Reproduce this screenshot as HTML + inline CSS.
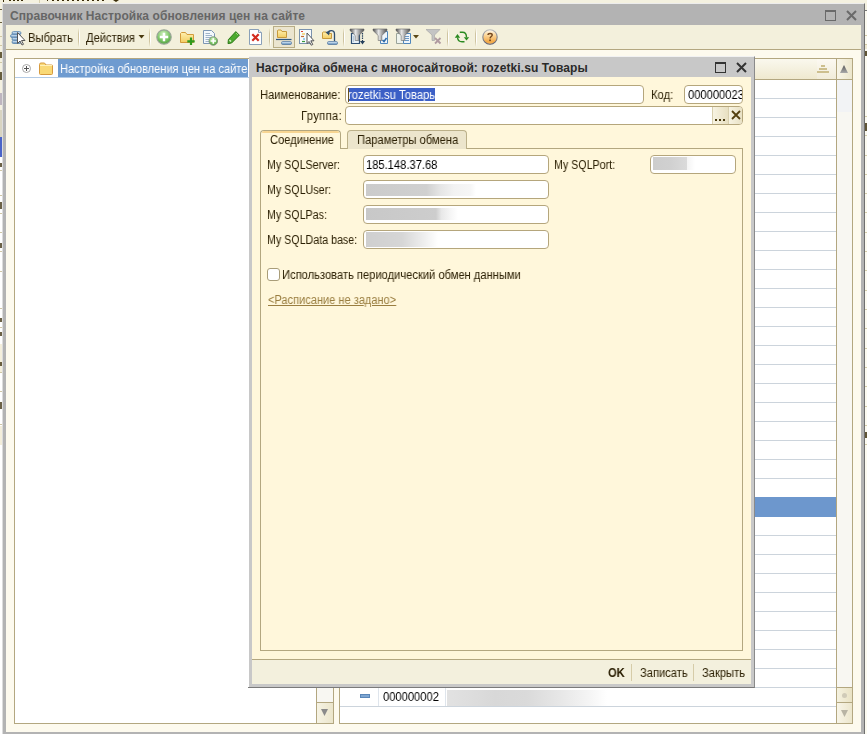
<!DOCTYPE html>
<html><head><meta charset="utf-8">
<style>
*{box-sizing:border-box;margin:0;padding:0}
html,body{width:867px;height:734px;overflow:hidden;background:#f4f1e0;font-family:"Liberation Sans",sans-serif;font-size:12px;color:#2c2004}
.a{position:absolute}
.t{position:absolute;white-space:nowrap;line-height:13px;font-size:12px;transform:scaleX(.93);transform-origin:0 0;will-change:transform}
.b{position:absolute;white-space:nowrap;line-height:14px;font-size:12px;font-weight:bold}
.fld{position:absolute;background:#fff;border:1px solid #b5a67c;border-radius:4px}
svg{position:absolute;overflow:visible}
</style></head><body>
<!-- background app -->
<div class="a" style="left:3px;top:0;width:1px;height:2px;background:#3a2c08"></div>
<div class="a" style="left:9px;top:0;width:15px;height:1px;background:repeating-linear-gradient(90deg,#3a2c08 0 2px,transparent 2px 4px)"></div>
<div class="a" style="left:39px;top:0;width:1px;height:3px;background:#d8d0b0"></div>
<div class="a" style="left:47px;top:0;width:1px;height:1px;background:#3a2c08"></div>
<div class="a" style="left:52px;top:0;width:54px;height:1px;background:repeating-linear-gradient(90deg,#3a2c08 0 2px,transparent 2px 5px)"></div>
<div class="a" style="left:113px;top:0;width:6px;height:2px;background:#3a2c08;clip-path:polygon(0 0,100% 0,50% 100%)"></div>
<div class="a" style="left:0;top:110px;width:3px;height:27px;background:#d8d4c0"></div>
<div class="a" style="left:0;top:137px;width:3px;height:20px;background:#4a64c8"></div>
<div class="a" style="left:0;top:157px;width:3px;height:583px;background:#fff"></div><div class="a" style="left:0;top:426px;width:2px;height:19px;background:#f3eedb"></div>
<div class="a" style="left:0;top:36px;width:2px;height:1px;background:#cfc6a4"></div>
<div class="a" style="left:0;top:45px;width:2px;height:1px;background:#cfc6a4"></div>
<div class="a" style="left:0;top:62px;width:2px;height:1px;background:#cfc6a4"></div>
<div class="a" style="left:0;top:170px;width:2px;height:1px;background:#cfc6a4"></div>
<div class="a" style="left:0;top:195px;width:2px;height:1px;background:#cfc6a4"></div>
<div class="a" style="left:0;top:213px;width:2px;height:1px;background:#cfc6a4"></div>
<div class="a" style="left:0;top:232px;width:2px;height:1px;background:#cfc6a4"></div>
<div class="a" style="left:0;top:251px;width:2px;height:1px;background:#cfc6a4"></div>
<div class="a" style="left:0;top:271px;width:2px;height:1px;background:#cfc6a4"></div>
<div class="a" style="left:0;top:308px;width:2px;height:1px;background:#cfc6a4"></div>
<div class="a" style="left:0;top:327px;width:2px;height:1px;background:#cfc6a4"></div>
<div class="a" style="left:0;top:344px;width:2px;height:1px;background:#cfc6a4"></div>
<div class="a" style="left:0;top:372px;width:2px;height:1px;background:#cfc6a4"></div>
<div class="a" style="left:0;top:391px;width:2px;height:1px;background:#cfc6a4"></div>
<div class="a" style="left:0;top:424px;width:2px;height:1px;background:#cfc6a4"></div>
<div class="a" style="left:0;top:344px;width:2px;height:28px;background:#f4efdc"></div>
<div class="a" style="left:0;top:9px;width:2px;height:1px;background:#3a2c08;opacity:.75"></div>
<div class="a" style="left:0;top:22px;width:2px;height:1px;background:#3a2c08;opacity:.75"></div>
<div class="a" style="left:0;top:52px;width:2px;height:6px;background:#3a2c08;opacity:.75"></div>
<div class="a" style="left:0;top:72px;width:2px;height:8px;background:#3a2c08;opacity:.75"></div>
<div class="a" style="left:0;top:163px;width:2px;height:4px;background:#3a2c08;opacity:.75"></div>
<div class="a" style="left:0;top:202px;width:2px;height:7px;background:#3a2c08;opacity:.75"></div>
<div class="a" style="left:0;top:243px;width:2px;height:5px;background:#3a2c08;opacity:.75"></div>
<div class="a" style="left:0;top:318px;width:2px;height:4px;background:#3a2c08;opacity:.75"></div>
<div class="a" style="left:0;top:332px;width:2px;height:4px;background:#3a2c08;opacity:.75"></div>
<div class="a" style="left:0;top:362px;width:2px;height:4px;background:#3a2c08;opacity:.75"></div>
<div class="a" style="left:0;top:402px;width:2px;height:7px;background:#3a2c08;opacity:.75"></div>
<div class="a" style="left:0;top:93px;width:2px;height:12px;background:#9a90a8;opacity:.6"></div>
<div class="a" style="left:865px;top:10px;width:2px;height:724px;background:#fcfaf0"></div>
<div class="a" style="left:865px;top:10px;width:2px;height:1px;background:#777"></div>
<div class="a" style="left:865px;top:35px;width:2px;height:1px;background:#cfc6a4"></div>
<div class="a" style="left:865px;top:44px;width:2px;height:5px;background:#efe9d2;border-top:1px solid #cfc6a4"></div>
<div class="a" style="left:865px;top:116px;width:2px;height:1px;background:#d4ccaa"></div>
<div class="a" style="left:865px;top:135px;width:2px;height:1px;background:#d4ccaa"></div>
<div class="a" style="left:865px;top:155px;width:2px;height:1px;background:#d4ccaa"></div>
<div class="a" style="left:865px;top:174px;width:2px;height:1px;background:#d4ccaa"></div>
<div class="a" style="left:865px;top:193px;width:2px;height:1px;background:#d4ccaa"></div>
<div class="a" style="left:865px;top:212px;width:2px;height:1px;background:#d4ccaa"></div>
<div class="a" style="left:865px;top:232px;width:2px;height:1px;background:#d4ccaa"></div>
<div class="a" style="left:865px;top:251px;width:2px;height:1px;background:#d4ccaa"></div>
<div class="a" style="left:865px;top:270px;width:2px;height:1px;background:#d4ccaa"></div>
<div class="a" style="left:865px;top:290px;width:2px;height:1px;background:#d4ccaa"></div>
<div class="a" style="left:865px;top:309px;width:2px;height:1px;background:#d4ccaa"></div>
<div class="a" style="left:865px;top:328px;width:2px;height:1px;background:#d4ccaa"></div>
<div class="a" style="left:865px;top:348px;width:2px;height:1px;background:#d4ccaa"></div>
<div class="a" style="left:865px;top:367px;width:2px;height:1px;background:#d4ccaa"></div>
<div class="a" style="left:865px;top:386px;width:2px;height:1px;background:#d4ccaa"></div>
<div class="a" style="left:865px;top:406px;width:2px;height:1px;background:#d4ccaa"></div>
<div class="a" style="left:865px;top:425px;width:2px;height:1px;background:#d4ccaa"></div>
<div class="a" style="left:865px;top:444px;width:2px;height:1px;background:#d4ccaa"></div>
<div class="a" style="left:865px;top:51px;width:2px;height:5px;background:#3a2c08;opacity:.8"></div>
<div class="a" style="left:865px;top:123px;width:2px;height:8px;background:#3a2c08;opacity:.8"></div>
<div class="a" style="left:865px;top:432px;width:2px;height:6px;background:#3a2c08;opacity:.8"></div>
<!-- main window frame -->
<div class="a" style="left:2px;top:3px;width:863px;height:731px;background:#b3b3b3;border-top:1px solid #ececec;border-left:1px solid #dcdcdc;border-right:1px solid #707070"></div>
<div class="b" style="left:10px;top:9px;color:#666;letter-spacing:.07px">Справочник Настройка обновления цен на сайте</div>
<div class="a" style="left:825px;top:10px;width:11px;height:11px;border:1px solid #6a6a6a;border-top-width:2px"></div>
<svg style="left:846px;top:10px" width="11" height="11"><path d="M1 1L10 10M10 1L1 10" stroke="#6a6a6a" stroke-width="2"/></svg>

<div class="a" style="left:6px;top:25px;width:855px;height:707px;background:#fdfaee"></div>
<!-- toolbar -->
<div class="a" style="left:6px;top:25px;width:855px;height:25px;background:#f3f0dc;border-bottom:1px solid #b3a780"></div>
<div class="t" style="left:28px;top:32px">Выбрать</div>
<div class="a" style="left:78px;top:28px;width:1px;height:19px;background:linear-gradient(#f3f0dc,#cfc4a0 30%,#cfc4a0 70%,#f3f0dc)"></div><div class="a" style="left:79px;top:28px;width:1px;height:19px;background:linear-gradient(#f3f0dc,#fff 30%,#fff 70%,#f3f0dc)"></div>
<div class="t" style="left:86px;top:32px">Действия</div>
<svg style="left:138px;top:35px" width="7" height="4"><path d="M0.5 0H6.5L3.5 3.5Z" fill="#4a3a10"/></svg>
<div class="a" style="left:149px;top:28px;width:1px;height:19px;background:linear-gradient(#f3f0dc,#cfc4a0 30%,#cfc4a0 70%,#f3f0dc)"></div><div class="a" style="left:150px;top:28px;width:1px;height:19px;background:linear-gradient(#f3f0dc,#fff 30%,#fff 70%,#f3f0dc)"></div>
<div class="a" style="left:269px;top:28px;width:1px;height:19px;background:linear-gradient(#f3f0dc,#cfc4a0 30%,#cfc4a0 70%,#f3f0dc)"></div><div class="a" style="left:270px;top:28px;width:1px;height:19px;background:linear-gradient(#f3f0dc,#fff 30%,#fff 70%,#f3f0dc)"></div>
<div class="a" style="left:273px;top:26px;width:22px;height:22px;background:#ebe5cf;border:1px solid #b8ad86"></div>
<div class="a" style="left:343px;top:28px;width:1px;height:19px;background:linear-gradient(#f3f0dc,#cfc4a0 30%,#cfc4a0 70%,#f3f0dc)"></div><div class="a" style="left:344px;top:28px;width:1px;height:19px;background:linear-gradient(#f3f0dc,#fff 30%,#fff 70%,#f3f0dc)"></div>
<div class="a" style="left:447px;top:28px;width:1px;height:19px;background:linear-gradient(#f3f0dc,#cfc4a0 30%,#cfc4a0 70%,#f3f0dc)"></div><div class="a" style="left:448px;top:28px;width:1px;height:19px;background:linear-gradient(#f3f0dc,#fff 30%,#fff 70%,#f3f0dc)"></div>
<div class="a" style="left:475px;top:28px;width:1px;height:19px;background:linear-gradient(#f3f0dc,#cfc4a0 30%,#cfc4a0 70%,#f3f0dc)"></div><div class="a" style="left:476px;top:28px;width:1px;height:19px;background:linear-gradient(#f3f0dc,#fff 30%,#fff 70%,#f3f0dc)"></div>

<svg style="left:0;top:0" width="1" height="1"><defs>
<linearGradient id="gBlueBar" x1="0" y1="0" x2="0" y2="1"><stop offset="0" stop-color="#e4eff8"/><stop offset=".5" stop-color="#a6c4e0"/><stop offset="1" stop-color="#4a78a6"/></linearGradient>
<radialGradient id="gGreen" cx=".45" cy=".3" r=".75"><stop offset="0" stop-color="#d2f0c0"/><stop offset=".55" stop-color="#80c86a"/><stop offset="1" stop-color="#4a9a3a"/></radialGradient>
<linearGradient id="gFold" x1="0" y1="0" x2="0" y2="1"><stop offset="0" stop-color="#fff0b0"/><stop offset="1" stop-color="#f3cd62"/></linearGradient>
<linearGradient id="gFun" x1="0" y1="0" x2="1" y2="0"><stop offset="0" stop-color="#4a4a4a"/><stop offset=".4" stop-color="#e8e8e8"/><stop offset=".6" stop-color="#b0b0b0"/><stop offset="1" stop-color="#505050"/></linearGradient>
<linearGradient id="gHelp" x1="0" y1="0" x2="0" y2="1"><stop offset="0" stop-color="#fffaf0"/><stop offset=".35" stop-color="#fbd9a0"/><stop offset=".85" stop-color="#f3a844"/><stop offset="1" stop-color="#f7c070"/></linearGradient><linearGradient id="gHelpB" x1="0" y1="0" x2="0" y2="1"><stop offset="0" stop-color="#b8b8b8"/><stop offset="1" stop-color="#5a5a6a"/></linearGradient>
</defs></svg>
<!-- Выбрать -->
<svg style="left:10px;top:31px" width="16" height="15">
 <rect x="2" y="0.5" width="9" height="3" rx="1.5" fill="url(#gBlueBar)" stroke="#5b86b0" stroke-width=".8"/>
 <rect x="0.5" y="3.5" width="10" height="3" rx="1.5" fill="url(#gBlueBar)" stroke="#5b86b0" stroke-width=".8"/>
 <rect x="2" y="6.5" width="9" height="3" rx="1.5" fill="url(#gBlueBar)" stroke="#5b86b0" stroke-width=".8"/>
 <rect x="2" y="9.5" width="9" height="3" rx="1.5" fill="url(#gBlueBar)" stroke="#5b86b0" stroke-width=".8"/>
 <path d="M7.5 1.5V12.5L10 10L12 14L13.5 13.3L11.5 9.5H15Z" fill="#fff" stroke="#555" stroke-width="1" stroke-linejoin="round"/>
</svg>
<!-- green plus -->
<svg style="left:156px;top:29px" width="16" height="16">
 <circle cx="8" cy="8" r="7.2" fill="url(#gGreen)" stroke="#9aa698" stroke-width="1.2"/>
 <path d="M8 3.8V12.2M3.8 8H12.2" stroke="#fff" stroke-width="2.4"/>
</svg>
<!-- folder plus -->
<svg style="left:180px;top:31px" width="16" height="15">
 <path d="M0.5 2.5V11.5H13.5V3.5H7L5.5 1.5H1.5Z" fill="url(#gFold)" stroke="#d39b3a" stroke-width="1"/>
 <path d="M11 6.5V14M7.3 10.3H14.7" stroke="#2f9a1e" stroke-width="2.2"/>
</svg>
<!-- doc plus -->
<svg style="left:203px;top:30px" width="16" height="16">
 <path d="M0.5 0.5H8.5L11.5 3.5V13.5H0.5Z" fill="#f4f8fc" stroke="#7c96b4" stroke-width="1"/>
 <path d="M2.5 3.5H7M2.5 5.5H9M2.5 7.5H9M2.5 9.5H6M2.5 11.5H6" stroke="#9fb3c9" stroke-width="1"/>
 <circle cx="10.3" cy="11" r="4.3" fill="url(#gGreen)" stroke="#7a8a7a" stroke-width=".8"/>
 <path d="M10.3 8.3V13.7M7.6 11H13" stroke="#fff" stroke-width="1.6"/>
</svg>
<!-- pencil -->
<svg style="left:227px;top:31px" width="13" height="13">
 <path d="M8.8 0.6L12.4 4.2L4.6 12L1 12.6L1.4 8.6Z" fill="#4caa2e" stroke="#2f7a1c" stroke-width="1" stroke-linejoin="round"/>
 <path d="M2.5 9L4 10.5" stroke="#d8f0c8" stroke-width="1.5"/>
 <path d="M9 2L11 4" stroke="#9ad67a" stroke-width="1"/>
</svg>
<!-- delete doc -->
<svg style="left:249px;top:29px" width="14" height="16">
 <path d="M0.5 0.5H9.5L12.5 3.5V15.5H0.5Z" fill="#fff" stroke="#8aa0b8" stroke-width="1"/>
 <path d="M9.5 0.5V3.5H12.5" fill="#e4ecf4" stroke="#8aa0b8" stroke-width="1"/>
 <path d="M3.3 5.3L9.7 11.7M9.7 5.3L3.3 11.7" stroke="#d22a1e" stroke-width="2.2"/>
</svg>
<!-- hierarchy (pressed) -->
<svg style="left:276px;top:29px" width="16" height="16">
 <path d="M1.5 1.5V8.5H10.5V2.5H6L5 1H2Z" fill="url(#gFold)" stroke="#c89a3c" stroke-width="1"/>
 <path d="M0 10.5H15.5" stroke="#2f567e" stroke-width="1.2"/>
 <rect x="5.5" y="12.5" width="10" height="3" rx="1.3" fill="url(#gBlueBar)" stroke="#5a7ea4" stroke-width=".8"/>
</svg>
<!-- list cursor -->
<svg style="left:299px;top:29px" width="17" height="17">
 <rect x="0.5" y="0.5" width="12" height="14" fill="#f8fafc" stroke="#7a92ae" stroke-width="1"/>
 <path d="M2 2.5H4" stroke="#e04030" stroke-width="1.2"/>
 <path d="M3 5H6" stroke="#f0c040" stroke-width="1.2"/>
 <path d="M2 7.5H5" stroke="#c06a30" stroke-width="1.2"/>
 <path d="M4 10H6" stroke="#40a0e0" stroke-width="1.2"/>
 <path d="M3 12.5H6" stroke="#3a9a3a" stroke-width="1.2"/>
 <path d="M8 4V14.5L10.2 12.5L12.2 16.2L13.8 15.5L11.8 11.8H15Z" fill="#fff" stroke="#555" stroke-width="1" stroke-linejoin="round"/>
</svg>
<!-- folder up/back -->
<svg style="left:322px;top:29px" width="17" height="17">
 <path d="M0.5 3.5V9.5H9.5V4.5H5L4 3H1Z" fill="url(#gFold)" stroke="#c89a3c" stroke-width="1"/>
 <rect x="5.5" y="12.5" width="10" height="3" rx="1.3" fill="url(#gBlueBar)" stroke="#5a7ea4" stroke-width=".8"/>
 <path d="M5.5 4.5C6 1 12.5 0 12.5 5V12" fill="none" stroke="#2f4e6e" stroke-width="1.3"/>
 <path d="M3.5 3L7 6.5L8 2Z" fill="#2f4e6e"/>
</svg>
<!-- filter 1 -->
<svg style="left:350px;top:29px" width="16" height="16">
 <path d="M1.5 4.5H9.5V14.5H1.5Z" fill="#e6f0f8" stroke="#2f4f74" stroke-width="1.2"/>
 <path d="M3 8H4M3 10H4M3 12H4" stroke="#8aa4c0" stroke-width="1"/>
 <path d="M0 0H14V1.5L8.8 6.5V11.5H5.2V6.5L0 1.5Z" fill="url(#gFun)" stroke="#666" stroke-width=".6"/>
 <path d="M12.5 4V13" stroke="#26405c" stroke-width="1.2" stroke-dasharray="1.5 .8"/><path d="M10 12H15L12.5 15.5Z" fill="#26405c"/>
</svg>
<!-- filter 2 -->
<svg style="left:373px;top:29px" width="16" height="16">
 <path d="M7.5 2.5H14.5V14.5H7.5Z" fill="#eef5fb" stroke="#4f86bc" stroke-width="1"/>
 <path d="M9.5 11L11 12.5L13.5 9" fill="none" stroke="#2c6aa8" stroke-width="1.5"/>
 <path d="M0 0H14V1.5L8.8 6.5V11.5H5.2V6.5L0 1.5Z" fill="url(#gFun)" stroke="#666" stroke-width=".6"/>
</svg>
<!-- filter 3 -->
<svg style="left:396px;top:29px" width="16" height="16">
 <path d="M0.5 4.5H7.5V14.5H0.5Z" fill="#eef3ee" stroke="#9aa49a" stroke-width="1"/>
 <path d="M7.5 4.5H14.5V14.5H7.5Z" fill="#eef5fb" stroke="#4f86bc" stroke-width="1"/>
 <path d="M9 7.5H13M9 9.5H13M9 11.5H13" stroke="#6a98c8" stroke-width="1"/>
 <path d="M0 0H14V1.5L8.8 6.5V11.5H5.2V6.5L0 1.5Z" fill="url(#gFun)" stroke="#666" stroke-width=".6"/>
</svg>
<svg style="left:413px;top:35px" width="6" height="4"><path d="M0 0H6L3 3.5Z" fill="#5a4818"/></svg>
<!-- filter off -->
<svg style="left:426px;top:29px" width="16" height="16">
 <path d="M0 0.5H14L8.5 6V11.5H6V6Z" fill="#c4c4c4" stroke="#a8a8a8" stroke-width=".7"/>
 <path d="M9 9L14.5 14.5M14.5 9L9 14.5" stroke="#b09aa0" stroke-width="1.8"/>
</svg>
<!-- refresh -->
<svg style="left:455px;top:31px" width="15" height="12">
 <path d="M2.5 6.5Q3 10.8 7 10.8H9.5" fill="none" stroke="#2a8a20" stroke-width="1.4"/>
 <path d="M4.8 1.3H7.5Q11.5 1.3 11.5 6.3" fill="none" stroke="#2a8a20" stroke-width="1.4"/>
 <path d="M-0.2 6.8H5.2L2.5 3Z" fill="#2a8a20"/>
 <path d="M8.8 6.2H14.2L11.5 9.6Z" fill="#2a8a20"/>
</svg>
<!-- help -->
<svg style="left:482px;top:29px" width="16" height="16">
 <circle cx="8" cy="8" r="7.2" fill="url(#gHelp)" stroke="url(#gHelpB)" stroke-width="1.1"/>
 <path d="M6 6C6 3.9 10.2 3.9 10.2 6C10.2 7.5 8.2 7.6 8 9.4" fill="none" stroke="#74461c" stroke-width="1.4"/>
 <rect x="7.2" y="10.5" width="1.7" height="1.6" fill="#74461c"/>
</svg>


<!-- tree panel -->
<div class="a" style="left:14px;top:58px;width:320px;height:666px;background:#fff;border:1px solid #b3a780"></div>
<div class="a" style="left:58px;top:59px;width:190px;height:18px;background:#6e9bd0"></div>
<div class="a" style="left:15px;top:77px;width:301px;height:1px;background:#b3cbe6"></div>
<div class="t" style="left:60px;top:63px;color:#fff;transform:scaleX(.92)">Настройка обновления цен на сайте</div>

<svg style="left:22px;top:64px" width="10" height="10">
 <circle cx="4.5" cy="4.5" r="4" fill="#fff" stroke="#a8a8a8" stroke-width="1"/>
 <path d="M4.5 2V7M2 4.5H7" stroke="#555" stroke-width="1"/>
</svg>
<svg style="left:39px;top:62px" width="15" height="13">
 <path d="M0.5 3V11.5Q0.5 12.5 1.5 12.5H12.5Q13.5 12.5 13.5 11.5V3.5Q13.5 3 12.5 3H7L5.5 1H2Q0.5 1 0.5 2.5Z" fill="#f9d977" stroke="#d69a3e" stroke-width="1"/>
 <path d="M1 3.5H13" stroke="#fff1b8" stroke-width="1"/>
</svg>

<div class="a" style="left:316px;top:59px;width:17px;height:664px;background:#f8f7f2;border-left:1px solid #b3a780"></div>
<div class="a" style="left:316px;top:702px;width:17px;height:21px;background:linear-gradient(90deg,#f6f3e4,#ebe5cb);border-left:1px solid #b3a780;border-top:1px solid #b3a780"></div>
<svg style="left:321px;top:709px" width="7" height="7"><path d="M0 0H7L3.5 7Z" fill="#8a8a8a"/></svg>

<!-- list panel -->
<div class="a" style="left:339px;top:58px;width:514px;height:666px;background:#fff;border:1px solid #b3a780"></div>
<div class="a" style="left:340px;top:59px;width:496px;height:21px;background:linear-gradient(#faf8ee,#efe9cf);border-bottom:1px solid #b3a780"></div>
<div class="a" style="left:817px;top:59px;width:19px;height:20px;background:linear-gradient(#fcf9f2,#f1ecd9)"></div>
<div class="a" style="left:817px;top:65px;width:12px;height:8px">
 <div class="a" style="left:4px;top:0;width:4px;height:2px;background:#cdbf8e"></div>
 <div class="a" style="left:2px;top:3px;width:8px;height:2px;background:#cdbf8e"></div>
 <div class="a" style="left:0;top:6px;width:12px;height:2px;background:#cdbf8e"></div>
</div>
<div class="a" style="left:340px;top:98px;width:496px;height:1px;background:#ccd4dc"></div><div class="a" style="left:340px;top:117px;width:496px;height:1px;background:#ccd4dc"></div><div class="a" style="left:340px;top:136px;width:496px;height:1px;background:#ccd4dc"></div><div class="a" style="left:340px;top:155px;width:496px;height:1px;background:#ccd4dc"></div><div class="a" style="left:340px;top:174px;width:496px;height:1px;background:#ccd4dc"></div><div class="a" style="left:340px;top:193px;width:496px;height:1px;background:#ccd4dc"></div><div class="a" style="left:340px;top:212px;width:496px;height:1px;background:#ccd4dc"></div><div class="a" style="left:340px;top:231px;width:496px;height:1px;background:#ccd4dc"></div><div class="a" style="left:340px;top:250px;width:496px;height:1px;background:#ccd4dc"></div><div class="a" style="left:340px;top:269px;width:496px;height:1px;background:#ccd4dc"></div><div class="a" style="left:340px;top:288px;width:496px;height:1px;background:#ccd4dc"></div><div class="a" style="left:340px;top:307px;width:496px;height:1px;background:#ccd4dc"></div><div class="a" style="left:340px;top:326px;width:496px;height:1px;background:#ccd4dc"></div><div class="a" style="left:340px;top:345px;width:496px;height:1px;background:#ccd4dc"></div><div class="a" style="left:340px;top:364px;width:496px;height:1px;background:#ccd4dc"></div><div class="a" style="left:340px;top:383px;width:496px;height:1px;background:#ccd4dc"></div><div class="a" style="left:340px;top:402px;width:496px;height:1px;background:#ccd4dc"></div><div class="a" style="left:340px;top:421px;width:496px;height:1px;background:#ccd4dc"></div><div class="a" style="left:340px;top:440px;width:496px;height:1px;background:#ccd4dc"></div><div class="a" style="left:340px;top:459px;width:496px;height:1px;background:#ccd4dc"></div><div class="a" style="left:340px;top:478px;width:496px;height:1px;background:#ccd4dc"></div><div class="a" style="left:340px;top:497px;width:496px;height:1px;background:#ccd4dc"></div><div class="a" style="left:340px;top:516px;width:496px;height:1px;background:#ccd4dc"></div><div class="a" style="left:340px;top:535px;width:496px;height:1px;background:#ccd4dc"></div><div class="a" style="left:340px;top:554px;width:496px;height:1px;background:#ccd4dc"></div><div class="a" style="left:340px;top:573px;width:496px;height:1px;background:#ccd4dc"></div><div class="a" style="left:340px;top:592px;width:496px;height:1px;background:#ccd4dc"></div><div class="a" style="left:340px;top:611px;width:496px;height:1px;background:#ccd4dc"></div><div class="a" style="left:340px;top:630px;width:496px;height:1px;background:#ccd4dc"></div><div class="a" style="left:340px;top:649px;width:496px;height:1px;background:#ccd4dc"></div><div class="a" style="left:340px;top:668px;width:496px;height:1px;background:#ccd4dc"></div><div class="a" style="left:340px;top:687px;width:496px;height:1px;background:#ccd4dc"></div><div class="a" style="left:340px;top:706px;width:496px;height:1px;background:#ccd4dc"></div>
<div class="a" style="left:340px;top:497px;width:496px;height:20px;background:#6d97cd"></div>
<div class="a" style="left:378px;top:688px;width:1px;height:18px;background:#dfe5ec"></div>
<div class="a" style="left:445px;top:688px;width:1px;height:18px;background:#dfe5ec"></div>
<div class="a" style="left:360px;top:694px;width:10px;height:4px;background:#7ea6d2;border:1px solid #5a86b8"></div>
<div class="t" style="left:383px;top:691px;color:#000">000000002</div>
<div class="a" style="left:447px;top:690px;width:160px;height:16px;background:linear-gradient(90deg,#e2e2e2,#d8d8d8 30%,#dadada 50%,#e8e8e8 72%,#f4f4f4 88%,#fff)"></div>
<!-- list scrollbar -->
<div class="a" style="left:836px;top:59px;width:16px;height:664px;background:#f8f7f2;border-left:1px solid #b3a780"></div>
<div class="a" style="left:837px;top:80px;width:15px;height:32px;background:#f2f3f5"></div>
<div class="a" style="left:836px;top:59px;width:16px;height:21px;background:linear-gradient(90deg,#f8f5e8,#ece6cc);border-left:1px solid #b3a780;border-bottom:1px solid #b3a780"></div>
<svg style="left:840px;top:65px" width="8" height="8"><defs><linearGradient id="ga" x1="0" y1="0" x2="0" y2="1"><stop offset="0" stop-color="#555"/><stop offset="1" stop-color="#aaa"/></linearGradient></defs><path d="M0 8H8L4 0Z" fill="url(#ga)"/></svg>
<div class="a" style="left:836px;top:687px;width:16px;height:16px;background:linear-gradient(90deg,#f5f2e0,#e9e2c4);border-left:1px solid #b3a780;border-top:1px solid #b3a780;border-bottom:1px solid #b3a780"></div>
<div class="a" style="left:842px;top:693px;width:5px;height:5px;border-radius:50%;background:#d0cbb8"></div>
<div class="a" style="left:836px;top:702px;width:16px;height:21px;background:linear-gradient(90deg,#f8f5e8,#ece6cc);border-left:1px solid #b3a780;border-top:1px solid #b3a780"></div>
<svg style="left:841px;top:710px" width="7" height="7"><path d="M0 0H7L3.5 7Z" fill="#b8b4a4"/></svg>

<!-- dialog -->
<div class="a" style="left:249px;top:56px;width:506px;height:632px;background:#c8c8c8;border-top:1px solid #f2f2f2;border-right:1px solid #8a8a8a;border-bottom:1px solid #7a7a7a"></div>
<div class="b" style="left:256px;top:61px;color:#2a2a2a;letter-spacing:.1px">Настройка обмена с многосайтовой: rozetki.su Товары</div>
<div class="a" style="left:715px;top:62px;width:11px;height:11px;border:1px solid #333;border-top-width:2px"></div>
<svg style="left:736px;top:62px" width="11" height="11"><path d="M1 1L10 10M10 1L1 10" stroke="#333" stroke-width="2"/></svg>
<div class="a" style="left:252px;top:77px;width:499px;height:607px;background:#fff7db"></div>
<div class="a" style="left:248px;top:687px;width:2px;height:1px;background:#7a7a7a"></div>

<div class="t" style="left:260px;top:89px">Наименование:</div>
<div class="fld" style="left:345px;top:85px;width:299px;height:19px"></div>
<div class="a" style="left:348px;top:88px;width:87px;height:13px;background:#3b5fc6"></div>
<div class="t" style="left:348px;top:89px;color:#fff">rozetki.su Товары</div><div class="a" style="left:348px;top:88px;width:1px;height:14px;background:#6a5420"></div>
<div class="t" style="left:651px;top:89px">Код:</div>
<div class="fld" style="left:684px;top:85px;width:59px;height:19px;overflow:hidden"><div class="t" style="left:3px;top:3px;color:#000">000000023</div></div>
<div class="t" style="left:301px;top:110px;letter-spacing:.4px">Группа:</div>
<div class="fld" style="left:345px;top:106px;width:398px;height:19px;overflow:hidden">
  <div class="a" style="left:366px;top:0;width:16px;height:17px;background:linear-gradient(90deg,#f7f3e2,#e8e0c2);border-left:1px solid #d8cfae"></div>
  <div class="a" style="left:382px;top:0;width:15px;height:17px;background:linear-gradient(90deg,#f7f3e2,#e8e0c2);border-left:1px solid #d8cfae"></div>
</div>
<div class="a" style="left:715px;top:119px;width:2px;height:2px;background:#4a3a10"></div>
<div class="a" style="left:719px;top:119px;width:2px;height:2px;background:#4a3a10"></div>
<div class="a" style="left:723px;top:119px;width:2px;height:2px;background:#4a3a10"></div>
<svg style="left:731px;top:110px" width="10" height="10"><path d="M1 1L9 9M9 1L1 9" stroke="#54400e" stroke-width="1.8"/></svg>

<!-- tabs -->
<div class="a" style="left:260px;top:148px;width:483px;height:503px;border:1px solid #b3a780"></div>
<div class="a" style="left:347px;top:130px;width:120px;height:19px;background:#ece5cc;border:1px solid #bbb089;border-bottom:none;border-radius:4px 4px 0 0"></div>
<div class="a" style="left:260px;top:130px;width:81px;height:19px;background:#fff7db;border:1px solid #b3a780;border-bottom:none;border-radius:4px 4px 0 0"></div>
<div class="a" style="left:262px;top:131px;width:77px;height:2px;background:#f7d592;border-radius:2px 2px 0 0"></div>
<div class="t" style="left:270px;top:134px">Соединение</div>
<div class="t" style="left:357px;top:134px">Параметры обмена</div>

<div class="t" style="left:267px;top:159px;transform:scaleX(.89)">My SQLServer:</div>
<div class="fld" style="left:363px;top:155px;width:186px;height:19px"></div>
<div class="t" style="left:366px;top:159px;color:#000">185.148.37.68</div>
<div class="t" style="left:554px;top:159px;transform:scaleX(.89)">My SQLPort:</div>
<div class="fld" style="left:650px;top:155px;width:86px;height:19px"></div>
<div class="a" style="left:653px;top:157px;width:42px;height:13px;background:linear-gradient(90deg,#cdcdcd,#d0d0d0 40%,#dadada 80%,#f4f4f4 82%,#fff)"></div>

<div class="t" style="left:267px;top:184px;transform:scaleX(.89)">My SQLUser:</div>
<div class="fld" style="left:363px;top:180px;width:186px;height:19px"></div>
<div class="a" style="left:366px;top:184px;width:110px;height:12px;background:linear-gradient(90deg,#cbcbcb,#d0d0d0 55%,#e6e6e6 68%,#f2f2f2 80%,#f6f6f6 95%,#fff)"></div>
<div class="t" style="left:267px;top:209px;transform:scaleX(.89)">My SQLPas:</div>
<div class="fld" style="left:363px;top:205px;width:186px;height:19px"></div>
<div class="a" style="left:366px;top:208px;width:92px;height:12px;background:linear-gradient(90deg,#c8c8c8,#cdcdcd 76%,#e8e8e8 82%,#f6f6f6 92%,#fff)"></div>
<div class="t" style="left:267px;top:234px;transform:scaleX(.89)">My SQLData base:</div>
<div class="fld" style="left:363px;top:230px;width:186px;height:19px"></div>
<div class="a" style="left:366px;top:232px;width:72px;height:15px;background:linear-gradient(90deg,#cfcfcf,#d6d6d6 50%,#eeeeee 80%,#fff)"></div>

<div class="a" style="left:267px;top:268px;width:13px;height:13px;background:#fff;border:1px solid #a99d79;border-radius:3px"></div>
<div class="t" style="left:282px;top:269px">Использовать периодический обмен данными</div>
<div class="t" style="left:268px;top:294px;color:#9a7e40;text-decoration:underline;transform:scaleX(.92)">&lt;Расписание не задано&gt;</div>

<!-- bottom buttons -->
<div class="a" style="left:252px;top:659px;width:499px;height:25px;background:#f3f0dd;border-top:1px solid #b3a780"></div>
<div class="t" style="left:608px;top:667px;font-weight:bold">OK</div>
<div class="a" style="left:631px;top:664px;width:1px;height:17px;background:#d6cca8"></div>
<div class="t" style="left:640px;top:667px">Записать</div>
<div class="a" style="left:693px;top:664px;width:1px;height:17px;background:#d6cca8"></div>
<div class="t" style="left:702px;top:667px">Закрыть</div>
</body></html>
